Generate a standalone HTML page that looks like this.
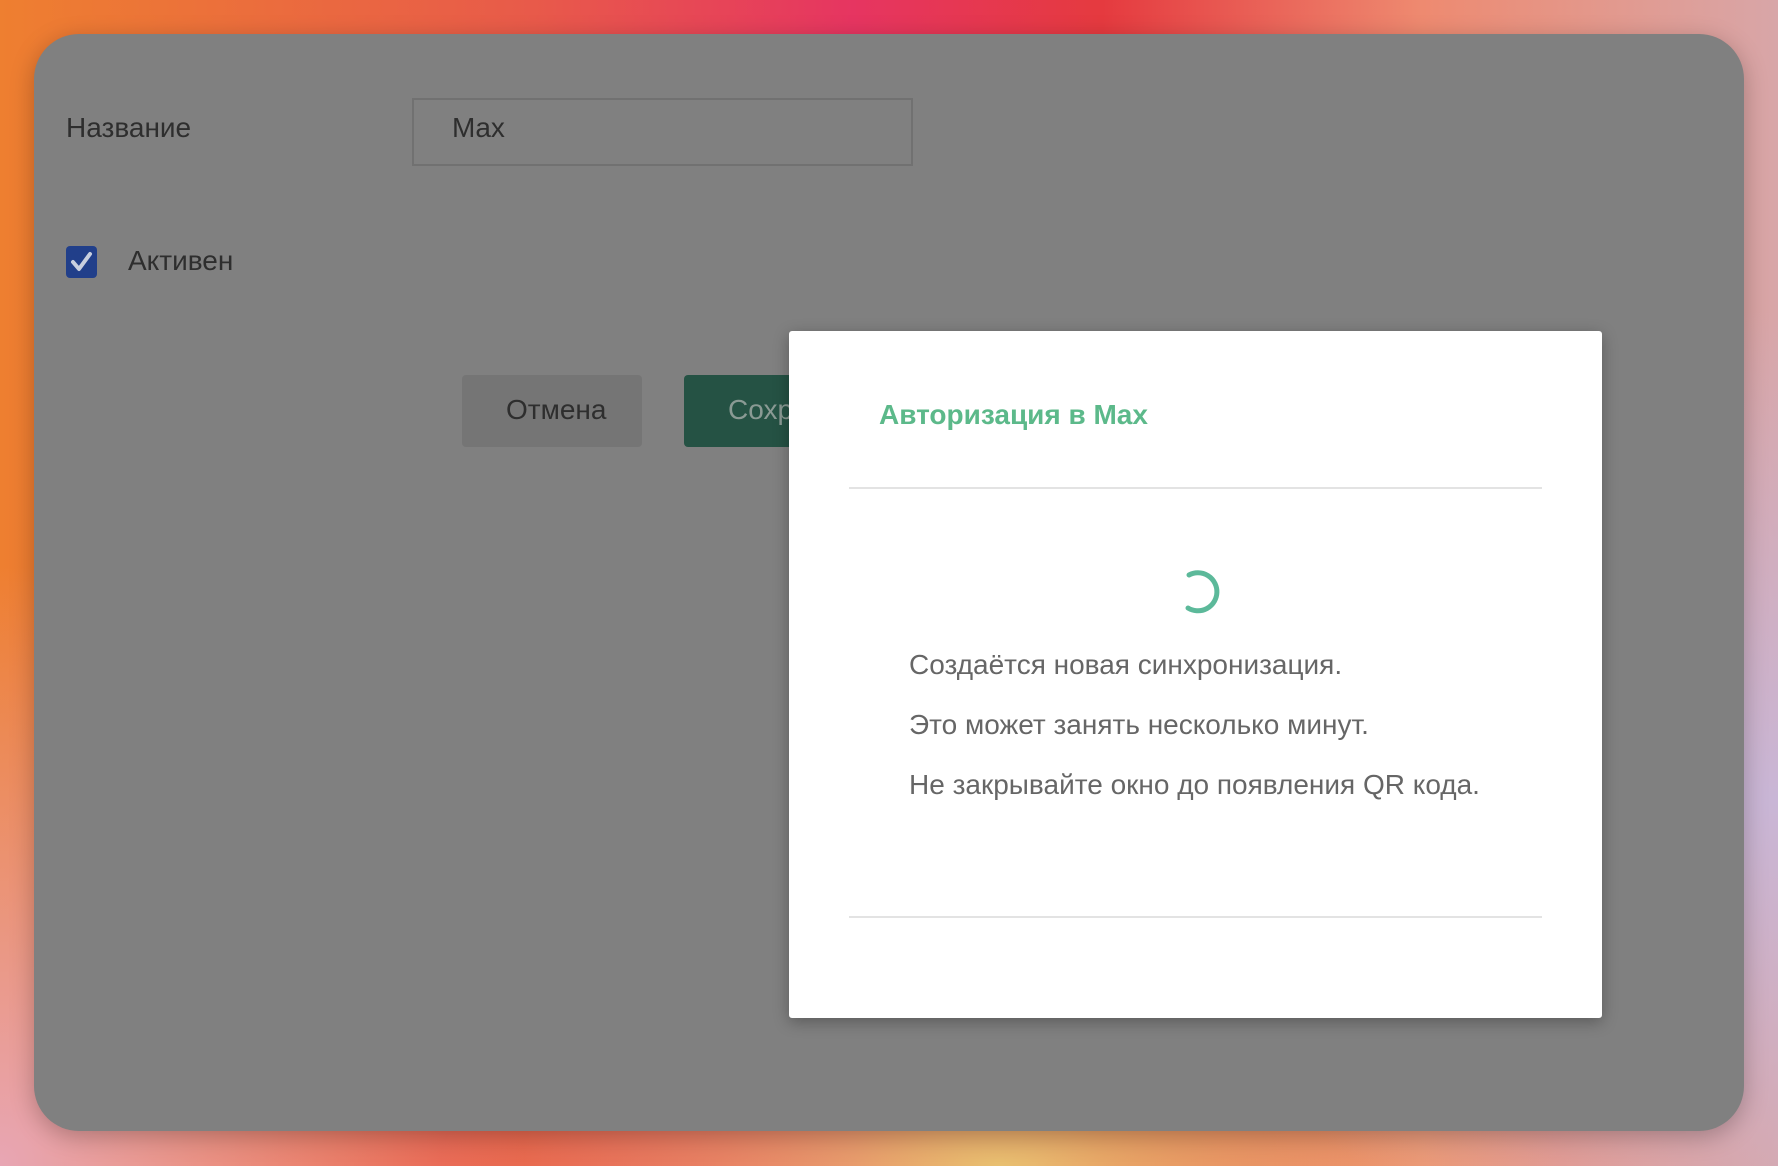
<!DOCTYPE html>
<html><head><meta charset="utf-8">
<style>
html,body{margin:0;padding:0;width:1778px;height:1166px;overflow:hidden;}
body{position:relative;font-family:"Liberation Sans",sans-serif;
background:
radial-gradient(ellipse 900px 700px at 1778px 800px, #c9b6d6 0%, rgba(201,182,214,0) 70%),
radial-gradient(ellipse 800px 300px at 1000px 1166px, #e8c070 0%, rgba(232,192,112,0) 70%),
radial-gradient(ellipse 700px 800px at 0px 1166px, #e8a6b4 0%, rgba(232,166,180,0) 75%),
linear-gradient(90deg,#ee7f30 0%,#e85a4a 30%,#e63561 48%,#e53a3f 62%,#ee8a70 80%,#d8a6a8 100%);}
.card{position:absolute;left:34px;top:34px;width:1710px;height:1097px;border-radius:45px;background:#808080;overflow:hidden;box-shadow:0 6px 24px rgba(0,0,0,.25);}
.t{position:absolute;white-space:nowrap;}
.lbl{font-size:28px;color:#2e2e2e;}
.input{position:absolute;left:378px;top:64px;width:497px;height:64px;border:2px solid #717171;}
.cb{position:absolute;left:32px;top:212px;width:31px;height:32px;background:#213f8a;border-radius:4px;}
.btn1{position:absolute;left:428px;top:341px;width:180px;height:72px;background:#757575;border-radius:4px;}
.btn2{position:absolute;left:650px;top:341px;width:180px;height:72px;background:#255244;border-radius:4px;}
.modal{position:absolute;left:789px;top:331px;width:813px;height:687px;background:#fff;border-radius:3px;box-shadow:0 4px 16px rgba(0,0,0,.3);}
.hr{position:absolute;left:60px;width:693px;height:2px;background:#e3e3e3;}
.mt{font-size:28px;color:#666;left:120px;}
</style></head><body>
<div class="card">
  <div class="t lbl" style="left:32px;top:78px;">Название</div>
  <div class="input"></div>
  <div class="t lbl" style="left:418px;top:78px;">Max</div>
  <div class="cb"><svg width="31" height="32" viewBox="0 0 31 32"><path d="M7 16 L13 23 L24 8" stroke="#c8cfdf" stroke-width="4" fill="none" stroke-linecap="round" stroke-linejoin="round"/></svg></div>
  <div class="t lbl" style="left:94px;top:211px;">Активен</div>
  <div class="btn1"></div>
  <div class="t lbl" style="left:472px;top:360px;color:#2e2e2e;">Отмена</div>
  <div class="btn2"></div>
  <div class="t lbl" style="left:694px;top:360px;color:#8a9a94;">Сохранить</div>
</div>
<div class="modal">
  <div class="t" style="left:90px;top:68px;font-size:28px;font-weight:bold;color:#5cb98a;">Авторизация в Max</div>
  <div class="hr" style="top:156px;"></div>
  <svg style="position:absolute;left:383px;top:236px" width="50" height="50" viewBox="0 0 50 50"><path d="M17 8 A19 19 0 1 1 16 41" stroke="#5cb99a" stroke-width="5" fill="none" stroke-linecap="round"/></svg>
  <div class="t mt" style="top:318px;">Создаётся новая синхронизация.</div>
  <div class="t mt" style="top:378px;">Это может занять несколько минут.</div>
  <div class="t mt" style="top:438px;">Не закрывайте окно до появления QR кода.</div>
  <div class="hr" style="top:585px;"></div>
</div>
</body></html>
